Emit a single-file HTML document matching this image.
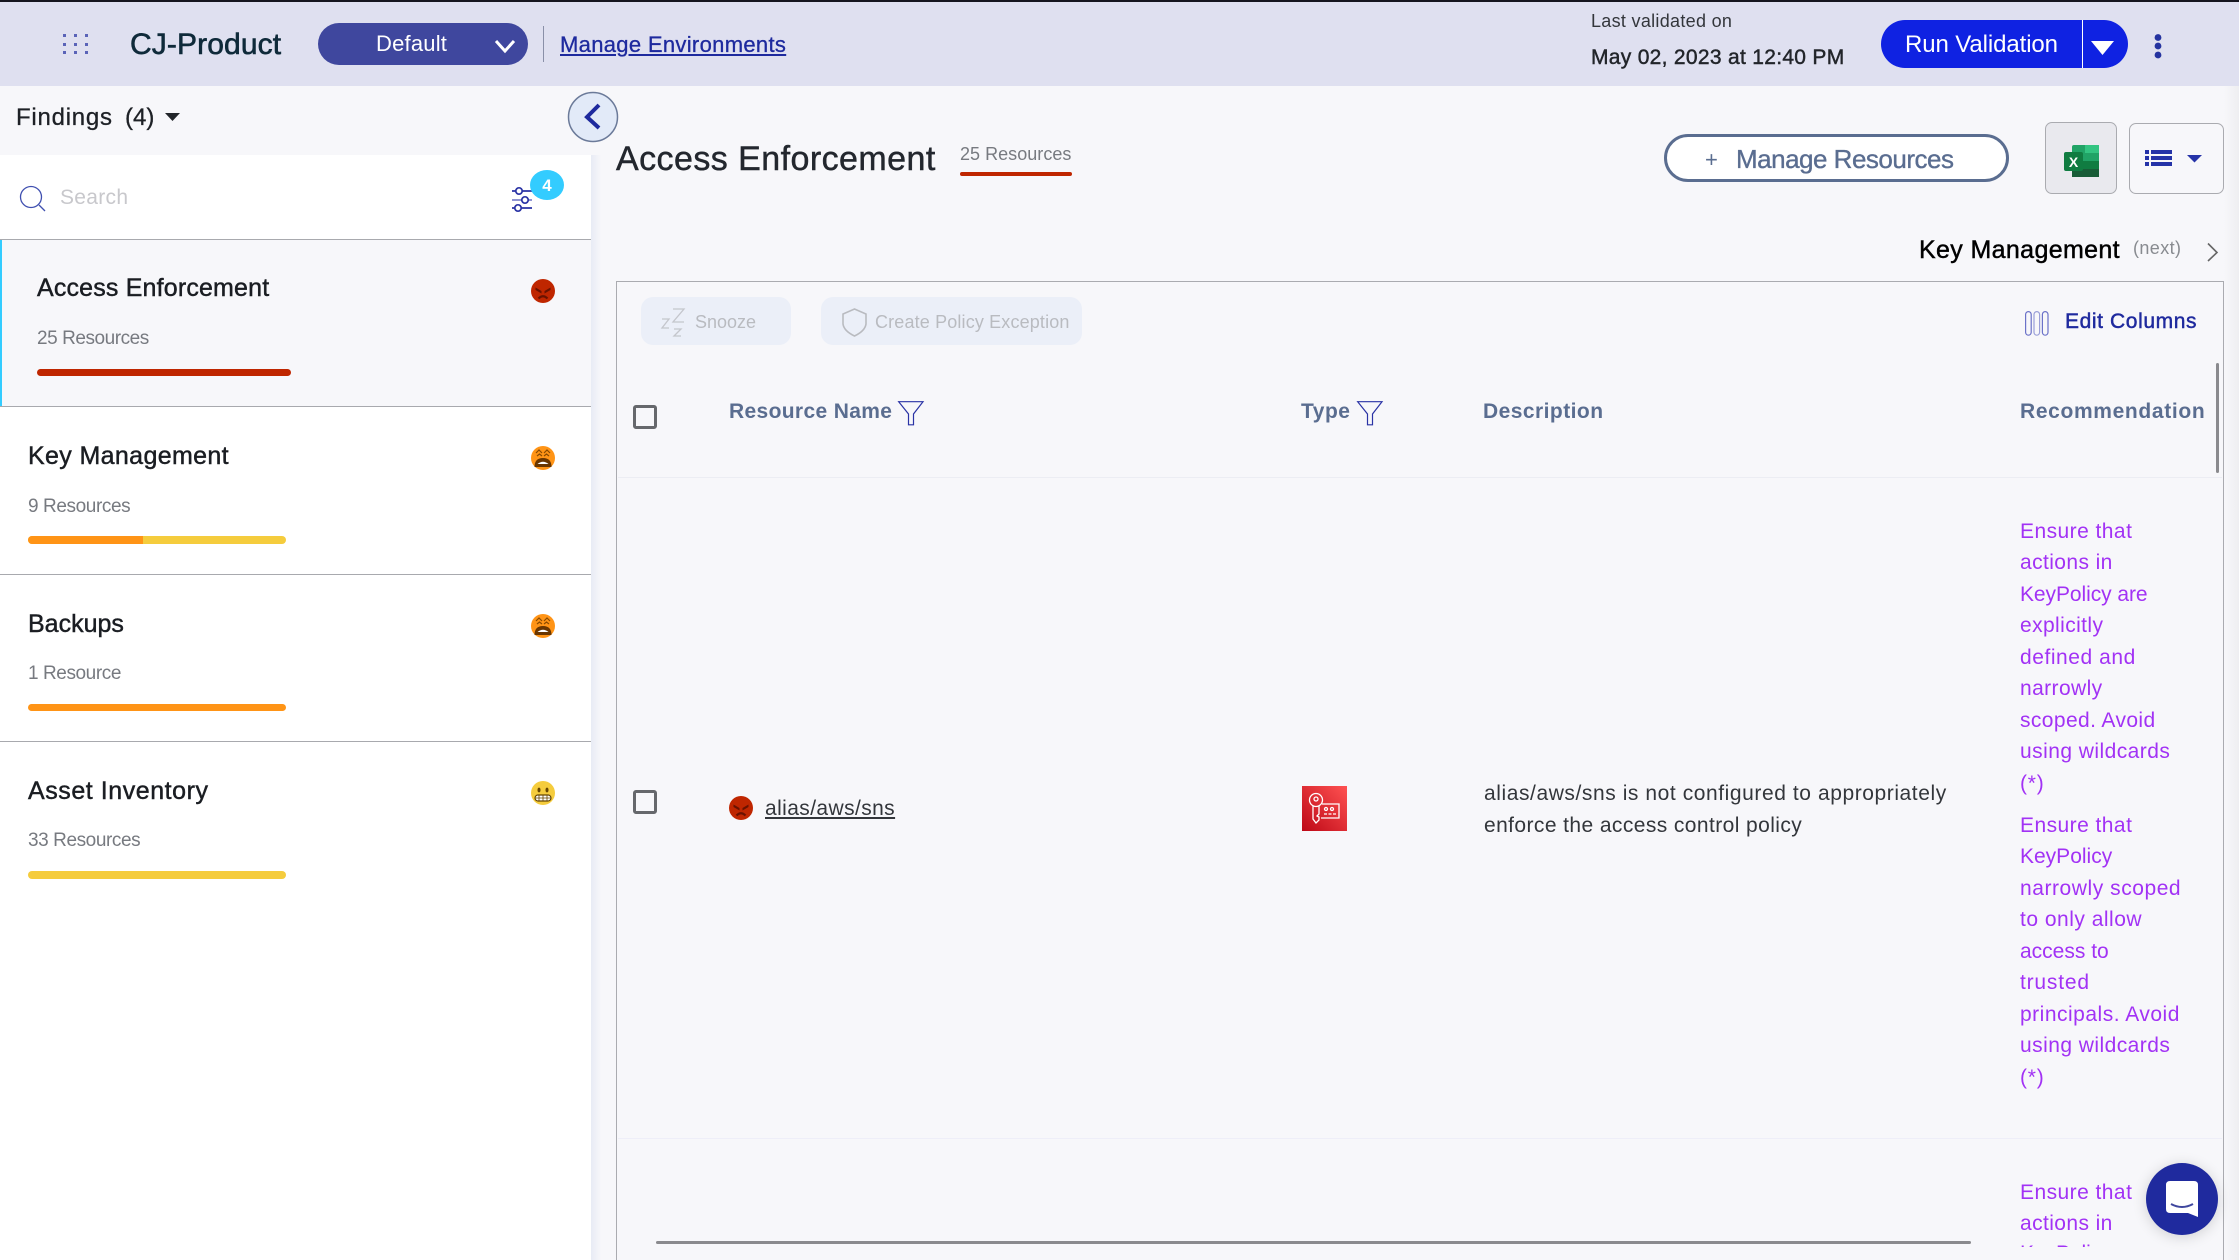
<!DOCTYPE html>
<html lang="en"><head><meta charset="utf-8"><title>CJ-Product Findings</title>
<style>
html,body{margin:0;padding:0;width:2239px;height:1260px;overflow:hidden;background:#f7f7fa;font-family:"Liberation Sans",sans-serif}
#p{position:relative;width:2239px;height:1260px;overflow:hidden}
.a{position:absolute}
.t{position:absolute;white-space:nowrap;height:40px;line-height:40px;margin-top:-20px}
.m{-webkit-text-stroke:.45px currentColor}
svg{position:absolute;overflow:visible}
.ln{position:absolute;left:0;width:591px;height:1px;background:#a8a9ae}
.st{font-size:25px;color:#1a1d22;-webkit-text-stroke:.45px #1a1d22}
.ss{font-size:19px;color:#777a80}
.bar{position:absolute;border-radius:4px;overflow:hidden}
.th{font-size:21px;font-weight:bold;color:#5a6d90}
.rec{font-size:21px;color:#a232f5;letter-spacing:.4px;left:1402px;margin-top:-18.5px}
.d{font-size:21px;color:#33363b;left:866px}
</style></head><body><div id="p">

<!-- header -->
<div class="a" style="left:0;top:0;width:2239px;height:86px;background:#dfe0f0"></div>
<div class="a" style="left:0;top:0;width:2239px;height:2px;background:#15151f"></div>
<svg style="left:0;top:0" width="120" height="86" fill="#5a63b8">
<rect x="63" y="34" width="3" height="3"/><rect x="74" y="34" width="3" height="3"/><rect x="85" y="34" width="3" height="3"/>
<rect x="63" y="43" width="3" height="3"/><rect x="74" y="43" width="3" height="3"/><rect x="85" y="43" width="3" height="3"/>
<rect x="63" y="51" width="3" height="3"/><rect x="74" y="51" width="3" height="3"/><rect x="85" y="51" width="3" height="3"/>
</svg>
<div class="t m" style="left:130px;top:45px;font-size:30px;color:#0f2a3a;letter-spacing:.12px;-webkit-text-stroke-width:.6px">CJ-Product</div>
<div class="a" style="left:318px;top:23px;width:210px;height:42px;border-radius:21px;background:#3f479e"></div>
<div class="t" style="left:376px;top:44px;font-size:22px;color:#fff;letter-spacing:.2px">Default</div>
<svg style="left:494px;top:39px" width="22" height="14"><path d="M2 2 L11 12 L20 2" fill="none" stroke="#fff" stroke-width="3"/></svg>
<div class="a" style="left:543px;top:26px;width:1px;height:36px;background:#8a90a8"></div>
<div class="t m" style="left:560px;top:45px;font-size:22px;color:#1e2a9e;letter-spacing:.32px;text-decoration:underline;-webkit-text-stroke-width:.3px">Manage Environments</div>

<div class="t" style="left:1591px;top:21px;font-size:18px;color:#33363b;letter-spacing:.3px">Last validated on</div>
<div class="t m" style="left:1591px;top:58px;font-size:21px;color:#22252a;letter-spacing:.3px">May 02, 2023 at 12:40 PM</div>
<div class="a" style="left:1881px;top:20px;width:247px;height:48px;border-radius:24px;background:#0f22e2"></div>
<div class="a" style="left:2082px;top:20px;width:1px;height:48px;background:#fff"></div>
<div class="t" style="left:1905px;top:45px;font-size:24px;color:#fff;letter-spacing:-.1px">Run Validation</div>
<svg style="left:2091px;top:41px" width="24" height="15"><path d="M0 0H23L11.5 14Z" fill="#fff"/></svg>
<svg style="left:2150px;top:32px" width="16" height="28" fill="#2533a0"><circle cx="8" cy="5.5" r="3.4"/><circle cx="8" cy="14" r="3.4"/><circle cx="8" cy="23" r="3.4"/></svg>

<!-- sidebar -->
<div class="a" style="left:0;top:86px;width:591px;height:69px;background:#f7f7fa"></div>
<div class="a" style="left:0;top:155px;width:591px;height:84px;background:#fff"></div>
<div class="a" style="left:0;top:406px;width:591px;height:854px;background:#fff"></div>
<div class="a" style="left:591px;top:155px;width:10px;height:1105px;background:linear-gradient(90deg,#e8ebf5,#f7f7fa)"></div>
<div class="a" style="left:2224px;top:86px;width:15px;height:1174px;background:linear-gradient(90deg,#f7f7fa,#eeeef1)"></div>

<div class="t m" style="left:16px;top:118px;font-size:24px;color:#1e2126;letter-spacing:.75px;-webkit-text-stroke-width:.3px">Findings</div>
<div class="t m" style="left:125px;top:118px;font-size:24px;color:#1e2126;-webkit-text-stroke-width:.3px">(4)</div>
<svg style="left:165px;top:113px" width="16" height="8"><path d="M0 0H15L7.5 8Z" fill="#22252a"/></svg>

<svg style="left:19px;top:185px" width="28" height="28" fill="none" stroke="#3f4fb0" stroke-width="1.3"><circle cx="12" cy="12" r="10.5"/><path d="M20 20L26 26"/></svg>
<div class="t" style="left:60px;top:198px;font-size:21px;color:#c8c8cc;letter-spacing:.3px">Search</div>
<svg style="left:510px;top:186px" width="26" height="28" fill="none" stroke="#2a33a5" stroke-width="1.7">
<path d="M2 5H22"/><circle cx="9" cy="5" r="3.2" fill="#fff"/>
<path d="M2 14H22" stroke="#8f94d2" stroke-width="2"/><circle cx="15" cy="14" r="3.2" fill="#fff"/>
<path d="M2 22H22"/><circle cx="8" cy="22" r="3.2" fill="#fff"/></svg>
<div class="a" style="left:530px;top:170px;width:34px;height:30px;border-radius:17px/15px;background:#33ccff;color:#fff;font-size:17px;font-weight:bold;text-align:center;line-height:32px">4</div>

<div class="a" style="left:0;top:239px;width:2px;height:167px;background:#33ccff"></div>
<div class="ln" style="top:239px"></div>
<div class="ln" style="top:406px"></div>
<div class="ln" style="top:574px"></div>
<div class="ln" style="top:741px"></div>

<div class="t st" style="left:37px;top:288px;letter-spacing:.17px">Access Enforcement</div>
<div class="t ss" style="left:37px;top:339px;letter-spacing:-.45px">25 Resources</div>
<div class="bar" style="left:37px;top:369px;width:254px;height:7px;background:#bf2600"></div>
<svg style="left:531px;top:279px" width="24" height="24"><circle cx="12" cy="12" r="12" fill="#bf2600"/><path d="M4.500 8.500l6 3.500v2.500l-6-3.500zM19.500 8.500l-6 3.500v2.500l6-3.500z" fill="#6a1200"/><path d="M7.500 19.500q4.500-4.500 9 0" fill="none" stroke="#6a1200" stroke-width="2.200"/></svg>

<div class="t st" style="left:28px;top:456px;letter-spacing:.36px">Key Management</div>
<div class="t ss" style="left:28px;top:507px;letter-spacing:-.4px">9 Resources</div>
<div class="bar" style="left:28px;top:536px;width:258px;height:8px;background:#f5cc3d"><div style="width:115px;height:8px;background:#ff9416"></div></div>
<svg style="left:531px;top:446px" width="24" height="24"><circle cx="12" cy="12" r="12" fill="#ff9416"/><path d="M5 7l3-3 3 3M13 7l3-3 3 3M6 10l2.500-2 2.500 2M13 10l2.500-2 2.500 2" fill="none" stroke="#8a4a00" stroke-width="1.200"/><path d="M3.500 21q0-9 8.500-9t8.500 9z" fill="#6a3600"/><path d="M6.500 18q5.500-4.500 11 0z" fill="#fff"/></svg>

<div class="t st" style="left:28px;top:624px">Backups</div>
<div class="t ss" style="left:28px;top:674px;letter-spacing:-.42px">1 Resource</div>
<div class="bar" style="left:28px;top:704px;width:258px;height:7px;background:#ff9416"></div>
<svg style="left:531px;top:614px" width="24" height="24"><circle cx="12" cy="12" r="12" fill="#ff9416"/><path d="M5 7l3-3 3 3M13 7l3-3 3 3M6 10l2.500-2 2.500 2M13 10l2.500-2 2.500 2" fill="none" stroke="#8a4a00" stroke-width="1.200"/><path d="M3.500 21q0-9 8.500-9t8.500 9z" fill="#6a3600"/><path d="M6.500 18q5.500-4.500 11 0z" fill="#fff"/></svg>

<div class="t st" style="left:28px;top:791px;letter-spacing:.55px">Asset Inventory</div>
<div class="t ss" style="left:28px;top:841px;letter-spacing:-.42px">33 Resources</div>
<div class="bar" style="left:28px;top:871px;width:258px;height:8px;background:#f5cc3d"></div>
<svg style="left:531px;top:781px" width="24" height="24"><circle cx="12" cy="12" r="12" fill="#f5cc3d"/><ellipse cx="8" cy="9" rx="1.5" ry="2.4" fill="#664500"/><ellipse cx="16" cy="9" rx="1.5" ry="2.4" fill="#664500"/><rect x="4" y="14" width="16" height="6" rx="3" fill="#fff" stroke="#664500" stroke-width="1.2"/><path d="M4 17H20M8 14V20M12 14V20M16 14V20" stroke="#664500" stroke-width=".8"/></svg>

<svg style="left:567px;top:91px" width="52" height="52"><circle cx="26" cy="26" r="24.5" fill="#e2eaf8" stroke="#6b7a99" stroke-width="1.5"/><path d="M32 14 L20 26 L32 37" fill="none" stroke="#1e2a9e" stroke-width="4"/></svg>

<!-- main head -->
<div class="t m" style="left:616px;top:159px;font-size:34px;color:#23272e;letter-spacing:.44px">Access Enforcement</div>
<div class="t" style="left:960px;top:154px;font-size:18px;color:#777a80;letter-spacing:.03px">25 Resources</div>
<div class="a" style="left:960px;top:172px;width:112px;height:4px;background:#bf2600;border-radius:2px"></div>

<div class="a" style="left:1664px;top:134px;width:339px;height:42px;border:3px solid #5a6d90;border-radius:24px;background:#fff"></div>
<div class="t" style="left:1705px;top:160px;font-size:22px;color:#5a6d90">+</div>
<div class="t m" style="left:1736px;top:159px;font-size:26px;color:#5a6d90;letter-spacing:-.5px;-webkit-text-stroke-width:.35px">Manage Resources</div>

<div class="a" style="left:2045px;top:122px;width:70px;height:70px;border:1px solid #aaabb0;border-radius:7px;background:#e9e9ee"></div>
<svg style="left:2064px;top:145px" width="36" height="33">
<rect x="8" y="0" width="27" height="32" rx="2" fill="#21a366"/><rect x="21" y="0" width="14" height="8" fill="#33c481"/>
<rect x="21" y="8" width="14" height="8" fill="#21a366"/><rect x="8" y="16" width="27" height="8" fill="#107c41"/><rect x="8" y="24" width="27" height="8" fill="#185c37"/>
<rect x="0" y="7" width="19" height="19" rx="2" fill="#107c41"/>
<text x="9.5" y="22" font-size="14" font-family="Liberation Sans" font-weight="bold" fill="#fff" text-anchor="middle">X</text></svg>
<div class="a" style="left:2129px;top:123px;width:93px;height:69px;border:1px solid #aaabb0;border-radius:7px;background:#f7f7fa"></div>
<svg style="left:2145px;top:150px" width="60" height="18" fill="#2533a8">
<rect x="0" y="0" width="4" height="4"/><rect x="6" y="0" width="21" height="4"/><rect x="0" y="6" width="4" height="4"/><rect x="6" y="6" width="21" height="4"/><rect x="0" y="12" width="4" height="4"/><rect x="6" y="12" width="21" height="4"/>
<path d="M42 5H57L49.5 12.5Z"/></svg>

<div class="t m" style="left:1919px;top:250px;font-size:25px;color:#000;letter-spacing:.36px">Key Management</div>
<div class="t" style="left:2133px;top:248px;font-size:18px;color:#888b90;letter-spacing:.4px">(next)</div>
<svg style="left:2206px;top:242px" width="14" height="20"><path d="M2 1.5 L11 10.5 L2 19" fill="none" stroke="#666" stroke-width="1.6"/></svg>

<!-- table box -->
<div class="a" style="left:616px;top:281px;width:1606px;height:979px;border:solid #aaabb0;border-width:1px 1px 0 1px"></div>
<div class="a" style="left:618px;top:283px;width:1604px;height:964px;overflow:hidden">
  <div class="a" style="left:23px;top:14px;width:150px;height:48px;border-radius:12px;background:#ebeff8"></div>
  <svg style="left:44px;top:24px" width="26" height="30" fill="none" stroke="#c4c6cc" stroke-width="1.3"><path d="M0 12h7l-7 9h7M11 2h11L11 15h11M12 22h7l-7 7h7"/></svg>
  <div class="t" style="left:77px;top:39px;font-size:18px;color:#b9bbc0">Snooze</div>
  <div class="a" style="left:203px;top:14px;width:261px;height:48px;border-radius:12px;background:#ebeff8"></div>
  <svg style="left:224px;top:25px" width="25" height="29"><path d="M12.500 1L24 6V16Q23 23 12.500 28Q2 23 1 16V6Z" fill="none" stroke="#b9bbc0" stroke-width="1.6"/></svg>
  <div class="t" style="left:257px;top:39px;font-size:18px;color:#b9bbc0;letter-spacing:.15px">Create Policy Exception</div>

  <svg style="left:1407px;top:28px" width="24" height="25" fill="none" stroke="#6b72c8" stroke-width="1.2"><rect x=".6" y=".6" width="5.600" height="23.600" rx="2.800"/><rect x="9" y=".6" width="5.600" height="23.600" rx="2.800" stroke="#9a9fd8"/><rect x="17.400" y=".6" width="5.600" height="23.600" rx="2.800"/></svg>
  <div class="t m" style="left:1447px;top:39px;font-size:21px;color:#1f2a9e;letter-spacing:.6px">Edit Columns</div>
  <div class="a" style="left:1598px;top:80px;width:3px;height:110px;background:#8a8a8e;border-radius:2px"></div>

  <div class="a" style="left:15px;top:122px;width:18px;height:18px;border:3px solid #66686c;border-radius:3px"></div>
  <div class="t th" style="left:111px;top:129px;letter-spacing:.35px">Resource Name</div>
  <svg style="left:280px;top:118px" width="26" height="25"><path d="M.7 .7H25L15.500 13V23.800H10.500V13Z" fill="none" stroke="#2a33a5" stroke-width="1.200"/></svg>
  <div class="t th" style="left:683px;top:129px;letter-spacing:.5px">Type</div>
  <svg style="left:739px;top:118px" width="26" height="25"><path d="M.7 .7H25L15.500 13V23.800H10.500V13Z" fill="none" stroke="#2a33a5" stroke-width="1.200"/></svg>
  <div class="t th" style="left:865px;top:129px;letter-spacing:.45px">Description</div>
  <div class="t th" style="left:1402px;top:129px;letter-spacing:.65px">Recommendation</div>
  <div class="a" style="left:0;top:194px;width:1604px;height:1px;background:#ecedf3"></div>

  <div class="a" style="left:15px;top:507px;width:18px;height:18px;border:3px solid #66686c;border-radius:3px"></div>
  <svg style="left:111px;top:513px" width="24" height="24"><circle cx="12" cy="12" r="12" fill="#bf2600"/><path d="M4.500 8.500l6 3.500v2.500l-6-3.500zM19.500 8.500l-6 3.500v2.500l6-3.500z" fill="#6a1200"/><path d="M7.500 19.500q4.500-4.500 9 0" fill="none" stroke="#6a1200" stroke-width="2.200"/></svg>
  <div class="t" style="left:147px;top:526px;font-size:21px;color:#33363b;letter-spacing:.4px;text-decoration:underline">alias/aws/sns</div>

  <svg style="left:684px;top:503px" width="45" height="45"><defs><linearGradient id="g" x1="0" y1="1" x2="1" y2="0"><stop offset="0" stop-color="#bd0816"/><stop offset="1" stop-color="#ff5252"/></linearGradient></defs>
  <rect width="45" height="45" fill="url(#g)"/><g fill="none" stroke="#fff" stroke-width="1.300"><circle cx="14" cy="14" r="6.500"/><circle cx="14" cy="13" r="2"/><path d="M11 20V33L14 37L17 34V31L15 30L17 28V20"/><path d="M20 18H37V32H19"/><circle cx="24" cy="23" r="1.500"/><circle cx="30" cy="23" r="1.500"/><path d="M22 28H34" stroke-dasharray="3 1.500"/></g></svg>

  <div class="t d" style="top:511px;letter-spacing:.57px">alias/aws/sns is not configured to appropriately</div>
  <div class="t d" style="top:543px;letter-spacing:.41px">enforce the access control policy</div>

  <div class="t rec" style="top:247px;letter-spacing:.45px">Ensure that</div>
  <div class="t rec" style="top:278px">actions in</div>
  <div class="t rec" style="top:310px;letter-spacing:-.07px">KeyPolicy are</div>
  <div class="t rec" style="top:341px">explicitly</div>
  <div class="t rec" style="top:373px;letter-spacing:.55px">defined and</div>
  <div class="t rec" style="top:404px">narrowly</div>
  <div class="t rec" style="top:436px">scoped. Avoid</div>
  <div class="t rec" style="top:467px;letter-spacing:.45px">using wildcards</div>
  <div class="t rec" style="top:499px;letter-spacing:.8px">(*)</div>
  <div class="t rec" style="top:541px;letter-spacing:.45px">Ensure that</div>
  <div class="t rec" style="top:572px;letter-spacing:0">KeyPolicy</div>
  <div class="t rec" style="top:604px;letter-spacing:.55px">narrowly scoped</div>
  <div class="t rec" style="top:635px;letter-spacing:.5px">to only allow</div>
  <div class="t rec" style="top:667px;letter-spacing:0">access to</div>
  <div class="t rec" style="top:698px;letter-spacing:.8px">trusted</div>
  <div class="t rec" style="top:730px;letter-spacing:.5px">principals. Avoid</div>
  <div class="t rec" style="top:761px;letter-spacing:.45px">using wildcards</div>
  <div class="t rec" style="top:793px;letter-spacing:.8px">(*)</div>
  <div class="a" style="left:0;top:855px;width:1604px;height:1px;background:#eeeef8"></div>
  <div class="t rec" style="top:908px;letter-spacing:.45px">Ensure that</div>
  <div class="t rec" style="top:939px">actions in</div>
  <div class="t rec" style="top:969px;letter-spacing:-.07px">KeyPolicy are</div>

  <div class="a" style="left:38px;top:958px;width:1315px;height:3px;background:#8a8a8e;border-radius:2px"></div>
</div>

<!-- chat -->
<div class="a" style="left:2146px;top:1163px;width:72px;height:72px;border-radius:50%;background:#1f2a9e;box-shadow:0 2px 14px rgba(0,0,0,.16)"></div>
<svg style="left:2166px;top:1181px" width="32" height="36"><path d="M4 0H28Q32 0 32 4V36L22 32H4Q0 32 0 28V4Q0 0 4 0Z" fill="#fff"/><path d="M5 23Q16 29 27 23" fill="none" stroke="#3f479e" stroke-width="2"/></svg>

</div></body></html>
